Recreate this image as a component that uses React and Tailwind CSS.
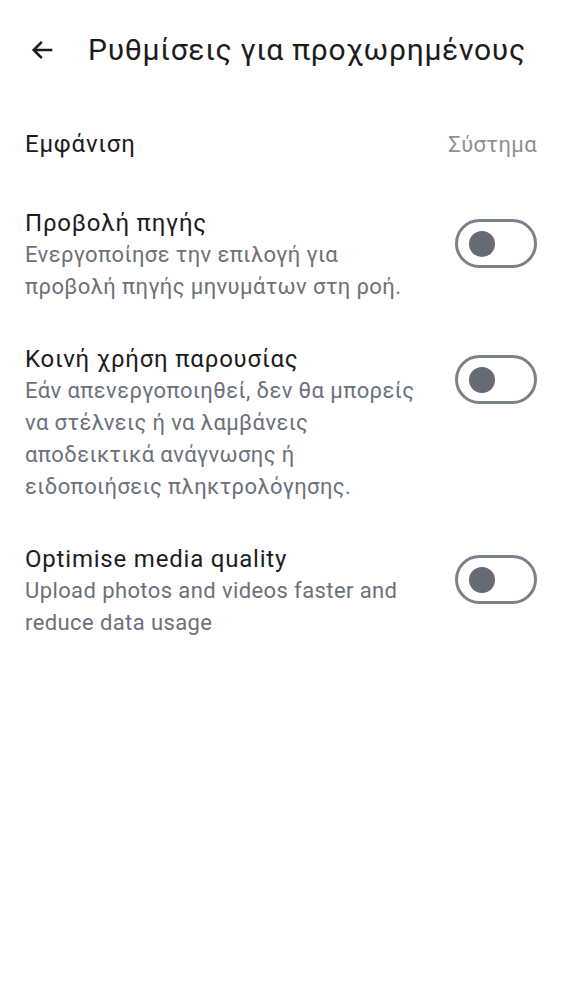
import React from "react";

const rows = [
  {
    title: "Προβολή πηγής",
    desc: "Ενεργοποίησε την επιλογή για προβολή πηγής μηνυμάτων στη ροή.",
  },
  {
    title: "Κοινή χρήση παρουσίας",
    desc: "Εάν απενεργοποιηθεί, δεν θα μπορείς να στέλνεις ή να λαμβάνεις αποδεικτικά ανάγνωσης ή ειδοποιήσεις πληκτρολόγησης.",
  },
  {
    title: "Optimise media quality",
    desc: "Upload photos and videos faster and reduce data usage",
  },
];

const Toggle = () => (
  <div className="mt-3 w-[82px] h-[49px] shrink-0 rounded-full border-[3px] border-[#7b8189] flex items-center pl-[11px]">
    <div className="w-[26px] h-[26px] rounded-full bg-[#646b75]" />
  </div>
);

const App = () => (
  <div className="min-h-screen bg-white font-['Roboto',sans-serif] text-[#1c1c1e]">
    <div className="flex items-center h-[100px] pl-[29px] pb-[1px]">
      <svg width="28" height="28" viewBox="0 0 24 24" fill="none" stroke="#1c1c1e" strokeWidth="2.2">
        <path d="M20 12H4.5M11 5l-7 7 7 7" />
      </svg>
      <h1 className="ml-[31px] text-[30px] leading-[36px] tracking-[0.7px]">
        Ρυθμίσεις για προχωρημένους
      </h1>
    </div>

    <div className="px-[25px]">
      <div className="flex justify-between items-center h-[32px] mt-[28px] text-[24px] tracking-[0.8px]">
        <span>Εμφάνιση</span>
        <span className="text-[22px] tracking-[0.4px] text-[#8b9199]">Σύστημα</span>
      </div>

      <div className="flex flex-col gap-[40px] mt-[47px]">
        {rows.map((r) => (
          <div key={r.title} className="flex justify-between gap-4">
            <div className="max-w-[390px]">
              <div className="text-[24px] leading-[32px] tracking-[0.8px]">{r.title}</div>
              <div className="text-[22px] leading-[32px] text-[#6b717a] tracking-[0.4px]">
                {r.desc}
              </div>
            </div>
            <Toggle />
          </div>
        ))}
      </div>
    </div>
  </div>
);

export default App;
